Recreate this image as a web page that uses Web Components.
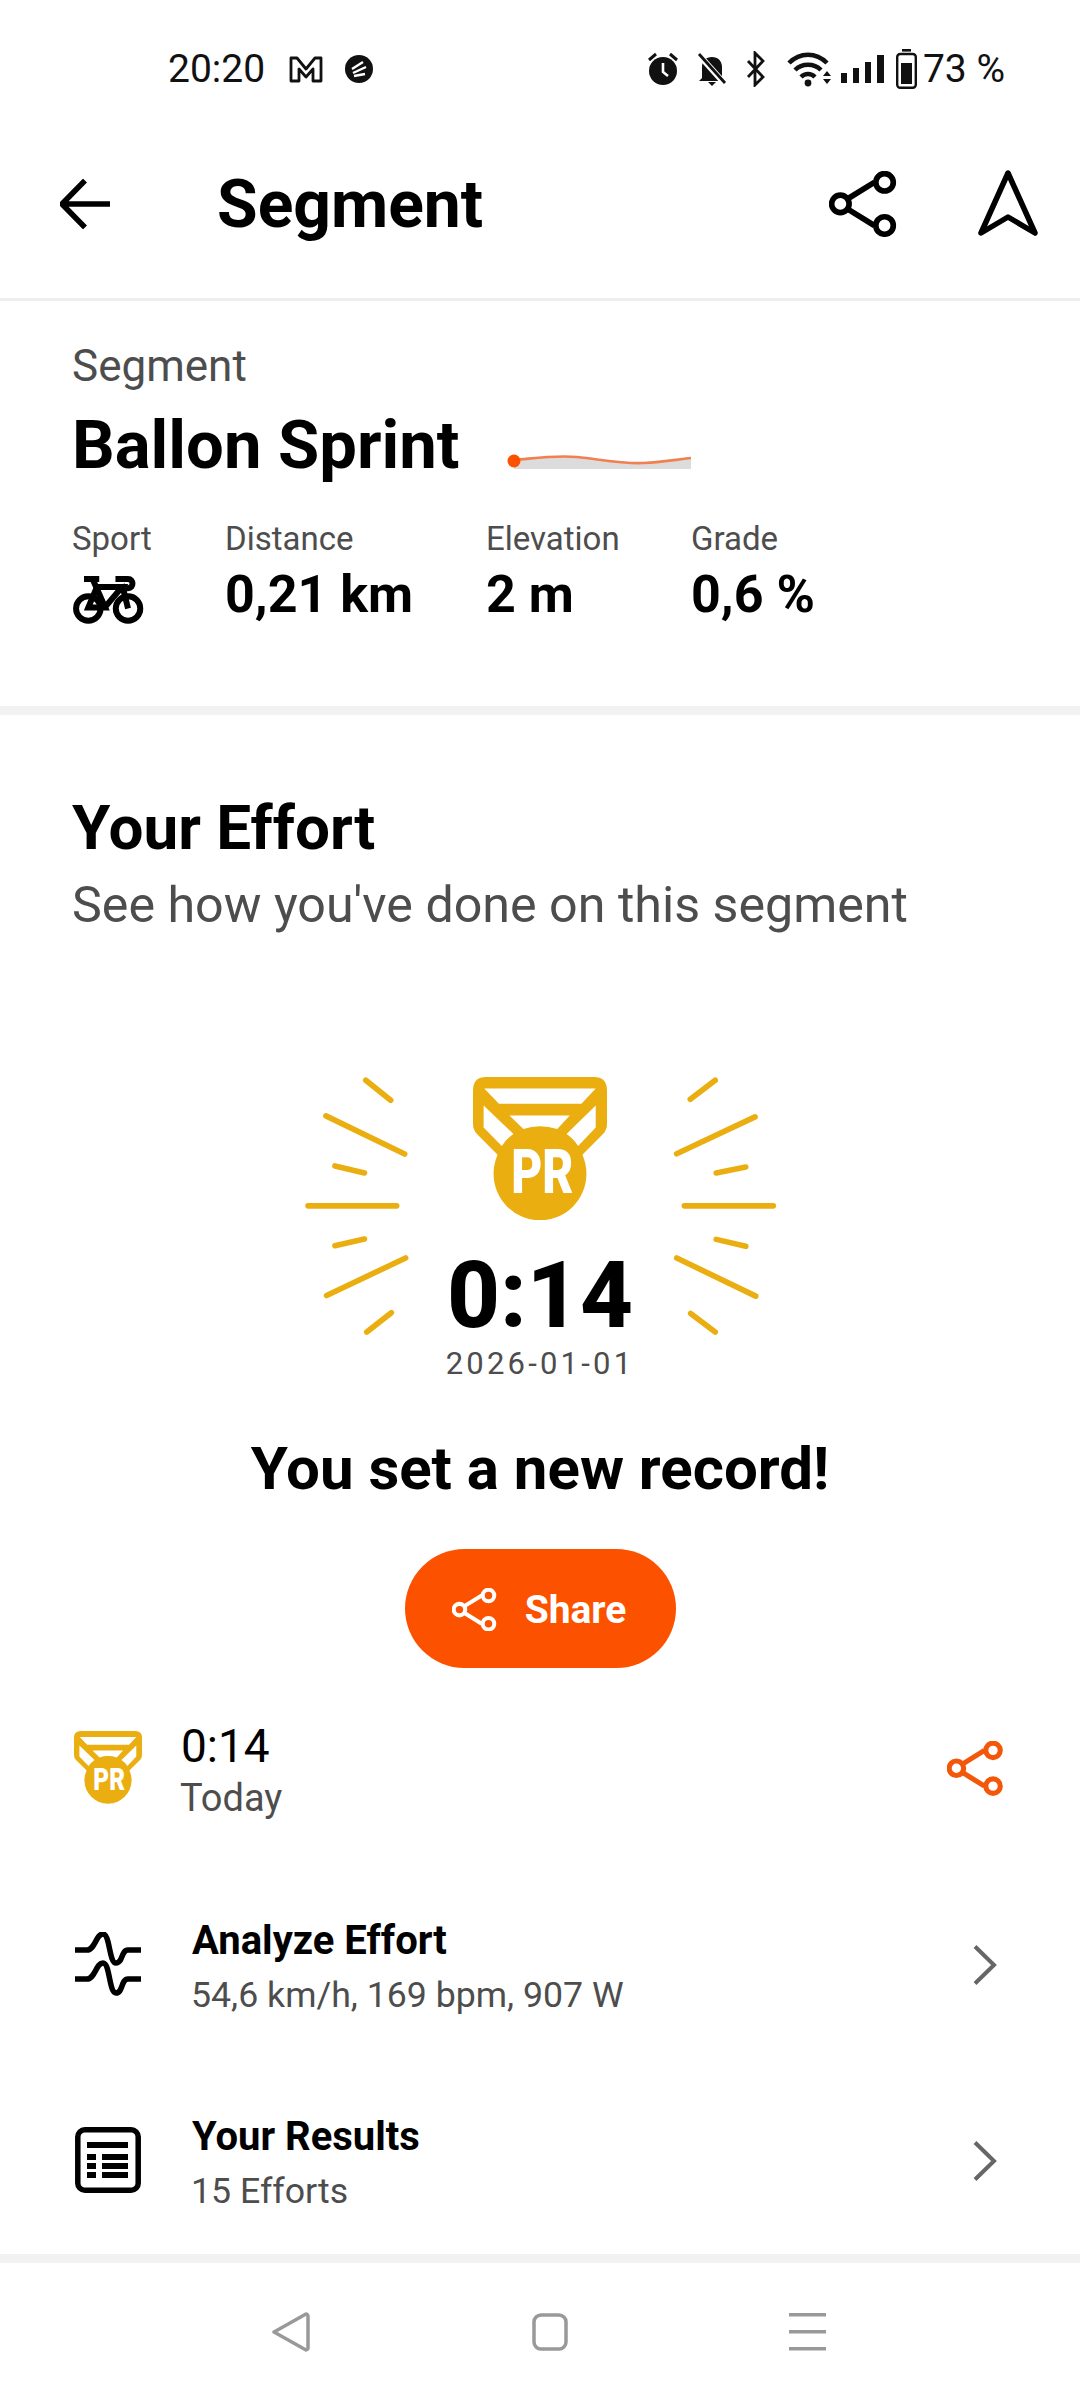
<!DOCTYPE html>
<html>
<head>
<meta charset="utf-8">
<title>Segment</title>
<style>
  html, body { margin: 0; padding: 0; background: #fff; }
  body { font-family: Roboto, "Liberation Sans", sans-serif; color: #000; }
</style>
</head>
<body>
<segment-screen></segment-screen>

<script>
const FONT = 'Roboto, "Liberation Sans", sans-serif';

class StatusBar extends HTMLElement {
  constructor() {
    super();
    this.attachShadow({ mode: "open" });
    this.shadowRoot.innerHTML = `
      <style>
        :host { display: flex; height: 100px; box-sizing: border-box; padding: 0 75px 0 168px; padding-top: 38px; justify-content: space-between; align-items: flex-start; font: 39px/62px ${FONT}; color: #111; }
        .side { display: flex; align-items: center; height: 62px; }
        svg { display: block; flex: none; }
      </style>
      <div class="side">
        <span>20:20</span>
        <svg style="margin-left:24px" width="34" height="27" viewBox="0 0 34 27"><path d="M2 25V2h6l9 11 9-11h6v23h-8V13l-7 8-7-8v12z" fill="none" stroke="#111" stroke-width="2.800" stroke-linejoin="round"/></svg>
        <svg style="margin-left:22px" width="28" height="28" viewBox="0 0 28 28"><circle cx="14" cy="14" r="14" fill="#111"/><path d="M7 14l11-7M8 18l13-6M9 21l11-2" stroke="#fff" stroke-width="2.400" fill="none"/></svg>
      </div>
      <div class="side">
        <svg width="34" height="34" viewBox="0 0 34 34"><circle cx="17" cy="19" r="14" fill="#111"/><path d="M3 8l7-6M31 8l-7-6" stroke="#111" stroke-width="3"/><path d="M17 11v9l5 4" stroke="#fff" stroke-width="2.600" fill="none"/></svg>
        <svg style="margin-left:16px" width="32" height="34" viewBox="0 0 32 34"><path d="M6 26V15c0-6 4-10 10-10s10 4 10 10v11l3 3H3z" fill="#111"/><path d="M12 30h8l-4 4z" fill="#111"/><path d="M3 3l26 29" stroke="#fff" stroke-width="6"/><path d="M3 2l26 29" stroke="#111" stroke-width="2.800"/></svg>
        <svg style="margin-left:18px" width="20" height="36" viewBox="0 0 20 36"><path d="M2 10l15 16-8 8V2l8 8L2 26" fill="none" stroke="#111" stroke-width="2.800"/></svg>
        <svg style="margin-left:20px" width="48" height="36" viewBox="0 0 46 36"><path d="M2 12c11-11 27-11 38 0" fill="none" stroke="#111" stroke-width="4.500"/><path d="M8 19c7-7 19-7 26 0" fill="none" stroke="#111" stroke-width="4.500"/><path d="M14 26c4-4 10-4 14 0" fill="none" stroke="#111" stroke-width="4.500"/><circle cx="21" cy="32" r="3.400" fill="#111"/><path d="M36 25l4-5 4 5zM36 28l4 5 4-5z" fill="#111"/></svg>
        <svg style="margin-left:7px" width="44" height="30" viewBox="0 0 44 30"><rect x="0" y="19" width="6" height="10" fill="#111"/><rect x="12" y="14" width="6" height="15" fill="#111"/><rect x="24" y="8" width="6" height="21" fill="#111"/><rect x="36" y="1" width="7" height="28" fill="#111"/></svg>
        <svg style="margin-left:11px" width="21" height="40" viewBox="0 0 21 40"><rect x="6" y="0" width="9" height="2.600" fill="#111"/><rect x="1.200" y="5" width="18.600" height="33.800" rx="3" fill="none" stroke="#111" stroke-width="2.400"/><rect x="5" y="14" width="11" height="21" fill="#111"/></svg>
        <span style="margin-left:6px">73 %</span>
      </div>
    `;
  }
}
customElements.define("status-bar", StatusBar);

class ShareIcon extends HTMLElement {
  constructor() {
    super();
    this.attachShadow({ mode: "open" });
  }
  connectedCallback() {
    const size = this.getAttribute("size") || 68;
    const color = this.getAttribute("color") || "#000";
    const sw = this.getAttribute("stroke") || 5;
    this.shadowRoot.innerHTML = `
      <style>:host { display: block; line-height: 0; flex: none; }</style>
      <svg width="${size}" height="${size * 0.94}" viewBox="0 0 68 64" fill="none" stroke="${color}" stroke-width="${sw}">
        <path d="M19 26.500L44 11M19 37.500L44 53"/>
        <circle cx="11" cy="32" r="8.500"/><circle cx="54" cy="11" r="8.500"/><circle cx="54" cy="53" r="8.500"/>
      </svg>
    `;
  }
}
customElements.define("share-icon", ShareIcon);

class AppBar extends HTMLElement {
  constructor() {
    super();
    this.attachShadow({ mode: "open" });
    this.shadowRoot.innerHTML = `
      <style>
        :host { display: flex; align-items: center; height: 201px; box-sizing: border-box; padding: 10px 42px 0 60px; border-bottom: 3px solid #eeeeee; }
        h1 { margin: 2px 0 0 107px; font: 700 66px/72px ${FONT}; flex: 1; }
        svg { display: block; flex: none; }
        share-icon { margin-right: 79px; }
      </style>
      <svg width="50" height="50" viewBox="0 0 50 50" fill="none" stroke="#000" stroke-width="5.500"><path d="M25 1.500L2 25l23 23.500M2 25h48"/></svg>
      <h1>Segment</h1>
      <share-icon size="70" stroke="5.500"></share-icon>
      <svg width="60" height="66" viewBox="0 0 60 66" fill="none" stroke="#000" stroke-width="5.500" stroke-linejoin="round" style="margin-bottom:2px"><path d="M30 3L3 63l27-16 27 16z"/></svg>
    `;
  }
}
customElements.define("app-bar", AppBar);

class StatItem extends HTMLElement {
  constructor() {
    super();
    this.attachShadow({ mode: "open" });
    this.shadowRoot.innerHTML = `
      <style>
        :host { display: block; flex: none; }
        .label { font: 33px/40px ${FONT}; color: #4d4d4d; }
        .value { display: flex; align-items: center; height: 60px; margin-top: 6px; font: 700 52px/60px ${FONT}; }
      </style>
      <div class="label"><slot name="label"></slot></div>
      <div class="value"><slot></slot></div>
    `;
  }
}
customElements.define("stat-item", StatItem);

class SegmentSummary extends HTMLElement {
  constructor() {
    super();
    this.attachShadow({ mode: "open" });
    this.shadowRoot.innerHTML = `
      <style>
        :host { display: block; box-sizing: border-box; height: 414px; padding: 43px 0 0 72px; border-bottom: 9px solid #f2f2f2; }
        .kicker { font: 44px/44px ${FONT}; color: #4d4d4d; }
        .title { display: flex; align-items: center; gap: 47px; margin-top: 21px; }
        h2 { margin: 0; font: 700 67px/72px ${FONT}; }
        .title svg { display: block; margin-top: 30px; }
        .stats { display: flex; margin-top: 38px; }
      </style>
      <div class="kicker">Segment</div>
      <div class="title">
        <h2>Ballon Sprint</h2>
        <svg width="184" height="18" viewBox="0 0 184 18">
          <path d="M7 9C30 7 48 4 70 6s44 7 66 6 30-3 48-5v11H7z" fill="#dcdcdc"/>
          <path d="M7 9C30 7 48 4 70 6s44 7 66 6 30-3 48-5" fill="none" stroke="#f08050" stroke-width="2.600"/>
          <circle cx="7" cy="10" r="6.500" fill="#fc5200"/>
        </svg>
      </div>
      <div class="stats">
        <stat-item style="width:153px"><span slot="label">Sport</span>
          <svg width="72" height="48" viewBox="65 45 215 145" fill="none" stroke="#000" stroke-width="18" style="display:block;margin-top:9px">
            <circle cx="113" cy="143" r="37"/><circle cx="233" cy="143" r="37"/>
            <path d="M100 54h46M126 54l38 86H113l26-62h76l-52 62M215 70l18 73M195 54h38c18 0 18 28 0 28h-6"/>
          </svg>
        </stat-item>
        <stat-item style="width:261px"><span slot="label">Distance</span>0,21 km</stat-item>
        <stat-item style="width:205px"><span slot="label">Elevation</span>2 m</stat-item>
        <stat-item><span slot="label">Grade</span>0,6 %</stat-item>
      </div>
    `;
  }
}
customElements.define("segment-summary", SegmentSummary);

class PrMedal extends HTMLElement {
  constructor() {
    super();
    this.attachShadow({ mode: "open" });
  }
  connectedCallback() {
    const w = Number(this.getAttribute("width") || 134);
    this.shadowRoot.innerHTML = `
      <style>:host { display: block; line-height: 0; flex: none; }</style>
      <svg width="${w}" height="${w * 432 / 404}" viewBox="578 80 404 432">
        <path d="M618 80H942Q982 80 982 120V222Q982 240 970 252L880 342H680L590 252Q578 240 578 222V120Q578 80 618 80Z" fill="#ebae10"/>
        <circle cx="780" cy="372" r="140" fill="#ebae10"/>
        <path d="M612 115H948L905 161H656ZM610 166L700 252Q680 265 665 288L610 232ZM948 166L860 252Q880 265 895 288L948 232ZM688 196H870L832 237Q780 220 730 237Z" fill="#fff"/>
        <text x="787" y="431" text-anchor="middle" fill="#fff" font-family="Roboto, 'Liberation Sans', sans-serif" font-weight="900" font-size="184" textLength="188" lengthAdjust="spacingAndGlyphs">PR</text>
      </svg>
    `;
  }
}
customElements.define("pr-medal", PrMedal);

class EffortHero extends HTMLElement {
  constructor() {
    super();
    this.attachShadow({ mode: "open" });
    this.shadowRoot.innerHTML = `
      <style>
        :host { display: block; margin-top: 144px; }
        .burst { display: grid; grid-template-columns: 108px 263px 108px; justify-content: center; }
        .mid { display: flex; flex-direction: column; align-items: center; }
        .time { margin-top: 26px; font: 800 92px/100px ${FONT}; }
        .date { margin-top: 0; font: 31px/36px ${FONT}; letter-spacing: 3.200px; color: #4d4d4d; white-space: nowrap; }
        svg.rays { display: block; }
        .msg { margin-top: 52px; text-align: center; font: 700 60px/70px ${FONT}; }
        .btn { display: flex; align-items: center; justify-content: center; gap: 27px; width: 271px; height: 119px; margin: 45px auto 0; border-radius: 60px; background: #fc5200; color: #fff; font: 700 39px/44px ${FONT}; box-sizing: border-box; padding: 2px 2px 0 0; }
      </style>
      <div class="burst">
        <svg class="rays" width="108" height="259" viewBox="55 80 325 780" stroke="#ebae10" stroke-width="17" stroke-linecap="round">
          <path d="M250 90L325 150M130 197L367 312M157 348L246 369M76 468H343M157 588L246 568M132 738L370 625M253 848L327 790"/>
        </svg>
        <div class="mid">
          <pr-medal width="134"></pr-medal>
          <div class="time">0:14</div>
          <div class="date">2026-01-01</div>
        </div>
        <svg class="rays" width="108" height="259" viewBox="1180 80 325 780" stroke="#ebae10" stroke-width="17" stroke-linecap="round">
          <path d="M1310 90L1235 147M1430 200L1194 311M1402 351L1313 369M1485 468H1217M1402 590L1313 569M1432 740L1194 625M1310 848L1236 792"/>
        </svg>
      </div>
      <div class="msg">You set a new record!</div>
      <div class="btn"><share-icon size="46" color="#fff" stroke="6"></share-icon><span>Share</span></div>
    `;
  }
}
customElements.define("effort-hero", EffortHero);

class EffortRow extends HTMLElement {
  constructor() {
    super();
    this.attachShadow({ mode: "open" });
    this.shadowRoot.innerHTML = `
      <style>
        :host { display: flex; align-items: center; height: 108px; padding: 0 75px 0 74px; }
        .icon { flex: none; width: var(--icon-w, 118px); line-height: 0; }
        .text { flex: 1; min-width: 0; }
        .top { font: 700 40px/54px ${FONT}; }
        .sub { font: 35.700px/54px ${FONT}; color: #4d4d4d; margin-left: -1px; }
        :host([plain]) .top { font: 400 46px/52px ${FONT}; }
        :host([plain]) .sub { font: 38px/52px ${FONT}; }
      </style>
      <div class="icon"><slot name="icon"></slot></div>
      <div class="text">
        <div class="top"><slot name="top"></slot></div>
        <div class="sub"><slot name="sub"></slot></div>
      </div>
      <slot name="end"></slot>
    `;
  }
}
customElements.define("effort-row", EffortRow);

class NavBar extends HTMLElement {
  constructor() {
    super();
    this.attachShadow({ mode: "open" });
    this.shadowRoot.innerHTML = `
      <style>
        :host { display: flex; justify-content: space-between; align-items: center; box-sizing: border-box; height: 146px; padding: 0 254px 0 272px; border-top: 9px solid #f2f2f2; }
        svg { display: block; }
      </style>
      <svg width="38" height="40" viewBox="0 0 38 40" fill="none" stroke="#999" stroke-width="3.500" stroke-linejoin="round"><path d="M2 20L34 2c1 0 2 1 2 2v32c0 1-1 2-2 2z"/></svg>
      <svg width="36" height="38" viewBox="0 0 36 38" fill="none" stroke="#999" stroke-width="3.500"><rect x="2" y="2" width="32" height="34" rx="7"/></svg>
      <svg width="37" height="38" viewBox="0 0 37 38" fill="#999"><rect y="0" width="37" height="3.500"/><rect y="17" width="37" height="3.500"/><rect y="34" width="37" height="3.500"/></svg>
    `;
  }
}
customElements.define("nav-bar", NavBar);

class SegmentScreen extends HTMLElement {
  constructor() {
    super();
    this.attachShadow({ mode: "open" });
    this.shadowRoot.innerHTML = `
      <style>
        :host { display: flex; flex-direction: column; width: 1080px; height: 2400px; overflow: hidden; background: #fff; color: #000; }
        .head { padding: 83px 0 0 72px; }
        h3 { margin: 0; font: 700 62px/60px ${FONT}; }
        .head p { margin: 19px 0 0; font: 50.200px/56px ${FONT}; color: #4d4d4d; }
        .rows { flex: 1; margin-top: 50px; }
        svg { display: block; }
        .chev { flex: none; margin: -7px 8px 0 0; }
        #results { margin-top: 88px; }
        #analyze { margin-top: 88px; }
        .ico { margin: -6px 0 0 1px; }
      </style>
      <status-bar></status-bar>
      <app-bar></app-bar>
      <segment-summary></segment-summary>
      <div class="head">
        <h3>Your Effort</h3>
        <p>See how you've done on this segment</p>
      </div>
      <effort-hero></effort-hero>
      <div class="rows">
        <effort-row plain style="--icon-w:107px">
          <pr-medal slot="icon" width="68" style="margin-top:-10px"></pr-medal>
          <span slot="top">0:14</span>
          <span slot="sub">Today</span>
          <share-icon slot="end" size="58" color="#f2570a" stroke="6" style="margin-top:-8px"></share-icon>
        </effort-row>
        <effort-row id="analyze">
          <svg slot="icon" class="ico" width="66" height="66" viewBox="0 0 66 66" fill="none" stroke="#000" stroke-width="5.500"><path d="M0 18H12C20 18 21 2 28 2S34 31 41 31 46 18 53 18H66M0 47H12C20 47 21 31 28 31S34 61 41 61 46 47 53 47H66"/></svg>
          <span slot="top">Analyze Effort</span>
          <span slot="sub">54,6 km/h, 169 bpm, 907 W</span>
          <svg slot="end" class="chev" width="24" height="40" viewBox="0 0 24 40" fill="none" stroke="#666" stroke-width="4"><path d="M2 1.500L21 20 2 38.500"/></svg>
        </effort-row>
        <effort-row id="results">
          <svg slot="icon" class="ico" style="margin-top:-8px" width="66" height="66" viewBox="0 0 66 66"><rect x="2.800" y="2.800" width="60.400" height="60.400" rx="7" fill="none" stroke="#000" stroke-width="5.500"/><path d="M12 15h41v6H12zM12 27h9v6h-9zM27 27h26v6H27zM12 36h9v6h-9zM27 36h26v6H27zM12 45h9v6h-9zM27 45h26v6H27z"/></svg>
          <span slot="top">Your Results</span>
          <span slot="sub">15 Efforts</span>
          <svg slot="end" class="chev" width="24" height="40" viewBox="0 0 24 40" fill="none" stroke="#666" stroke-width="4"><path d="M2 1.500L21 20 2 38.500"/></svg>
        </effort-row>
      </div>
      <nav-bar></nav-bar>
    `;
  }
}
customElements.define("segment-screen", SegmentScreen);
</script>
</body>
</html>
